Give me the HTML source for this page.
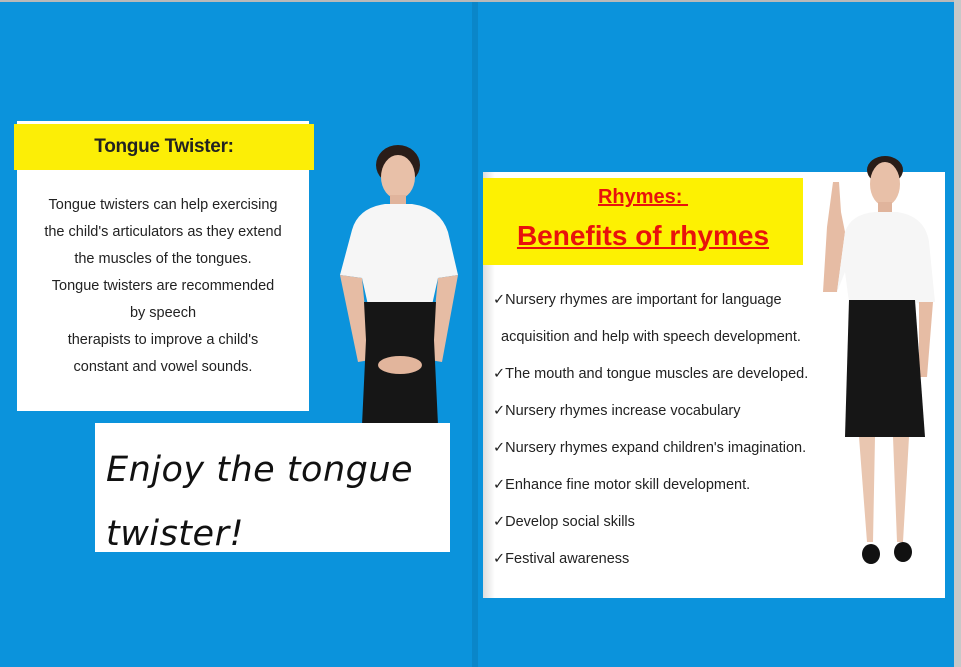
<!DOCTYPE html>
<html><head><style>
*{margin:0;padding:0;box-sizing:border-box}
body{width:961px;height:667px;overflow:hidden;background:#0b93dc;position:relative;font-family:"Comic Sans MS","Liberation Sans",sans-serif}
.a{position:absolute}
.t{font-size:15px;color:#222;}
</style></head><body>
<div class="a" style="left:0;top:0;width:961px;height:2px;background:#b9b9b9"></div>
<div class="a" style="left:954px;top:0;width:7px;height:667px;background:#c8c8c8"></div>
<div class="a" style="left:472px;top:2px;width:6px;height:665px;background:#0a86c9"></div>

<div class="a" style="left:17px;top:121px;width:292px;height:290px;background:#fff"></div>
<div class="a" style="left:14px;top:124px;width:300px;height:46px;background:#fcee06;text-align:center;font:bold 19px 'Liberation Sans',sans-serif;line-height:46px;color:#222;letter-spacing:-0.3px">Tongue Twister:</div>
<div class="a t" style="left:17px;top:192px;width:292px;text-align:center;line-height:27px;font-size:14.5px">Tongue twisters can help exercising<br>the child's articulators as they extend<br>the muscles of the tongues.<br>Tongue twisters are recommended<br>by speech<br>therapists to improve a child's<br>constant and vowel sounds.</div>

<svg class="a" style="left:330px;top:140px" width="135" height="285" viewBox="0 0 135 285">
<ellipse cx="68" cy="25" rx="22" ry="20" fill="#2a1d18"/>
<ellipse cx="68" cy="37" rx="17" ry="22" fill="#e8c0a8"/>
<rect x="60" y="55" width="16" height="14" fill="#e0b49c"/>
<path d="M22 90 Q28 68 55 64 L82 64 Q110 68 118 92 L128 135 L108 138 L102 165 L38 165 L32 138 L10 135 Z" fill="#f6f6f6"/>
<path d="M10 135 L32 138 L40 220 L28 222 Z M128 135 L108 138 L100 220 L112 222 Z" fill="#e6bca4"/>
<path d="M34 162 L106 162 L104 200 L108 285 L32 285 L36 200 Z" fill="#161616"/>
<ellipse cx="70" cy="225" rx="22" ry="9" fill="#e2b59c"/>
</svg>

<div class="a" style="left:95px;top:423px;width:355px;height:129px;background:#fff;overflow:hidden"></div>
<div class="a" style="left:106px;top:438px;font:oblique 35px 'DejaVu Sans',sans-serif;color:#111;line-height:64px;font-weight:300;letter-spacing:0.5px">Enjoy the tongue<br>twister!</div>

<div class="a" style="left:483px;top:172px;width:462px;height:426px;background:#fff"></div>
<div class="a" style="left:483px;top:172px;width:12px;height:426px;background:linear-gradient(90deg,#ddd,#fff)"></div>
<div class="a" style="left:483px;top:178px;width:320px;height:87px;background:#fdf102"></div>
<div class="a" style="left:483px;top:186px;width:320px;text-align:center;font:bold 20px 'Liberation Sans',sans-serif;color:#e8120c;text-decoration:underline">Rhymes:&nbsp;</div>
<div class="a" style="left:483px;top:220px;width:320px;text-align:center;font:bold 28px 'Liberation Sans',sans-serif;color:#e8120c;text-decoration:underline">Benefits of rhymes</div>
<div class="a t" style="left:493px;top:282px;line-height:37px;font-size:14.5px">✓Nursery rhymes are important for language<br>&nbsp;&nbsp;acquisition and help with speech development.<br>✓The mouth and tongue muscles are developed.<br>✓Nursery rhymes increase vocabulary<br>✓Nursery rhymes expand children's imagination.<br>✓Enhance fine motor skill development.<br>✓Develop social skills<br>✓Festival awareness</div>

<svg class="a" style="left:815px;top:152px" width="125" height="415" viewBox="0 0 125 415">
<ellipse cx="70" cy="18" rx="18" ry="14" fill="#2a1d18"/>
<ellipse cx="70" cy="32" rx="15" ry="22" fill="#e8c0a8"/>
<rect x="63" y="50" width="14" height="14" fill="#e0b49c"/>
<path d="M18 30 L24 30 L26 60 L30 80 L22 140 L8 140 L12 75 Z" fill="#e6bca4"/>
<path d="M30 80 Q36 62 60 60 L82 60 Q110 64 114 90 L120 150 L104 152 L100 150 L34 150 L30 120 L22 140 Z" fill="#f6f6f6"/>
<path d="M104 150 L118 150 L112 225 L104 225 Z" fill="#e6bca4"/>
<path d="M34 148 L100 148 L110 285 L30 285 Z" fill="#161616"/>
<path d="M44 285 L60 285 L58 390 L52 390 Z M78 285 L94 285 L88 390 L82 390 Z" fill="#e9c6b0"/>
<ellipse cx="56" cy="402" rx="9" ry="10" fill="#111"/>
<ellipse cx="88" cy="400" rx="9" ry="10" fill="#111"/>
</svg>
</body></html>
